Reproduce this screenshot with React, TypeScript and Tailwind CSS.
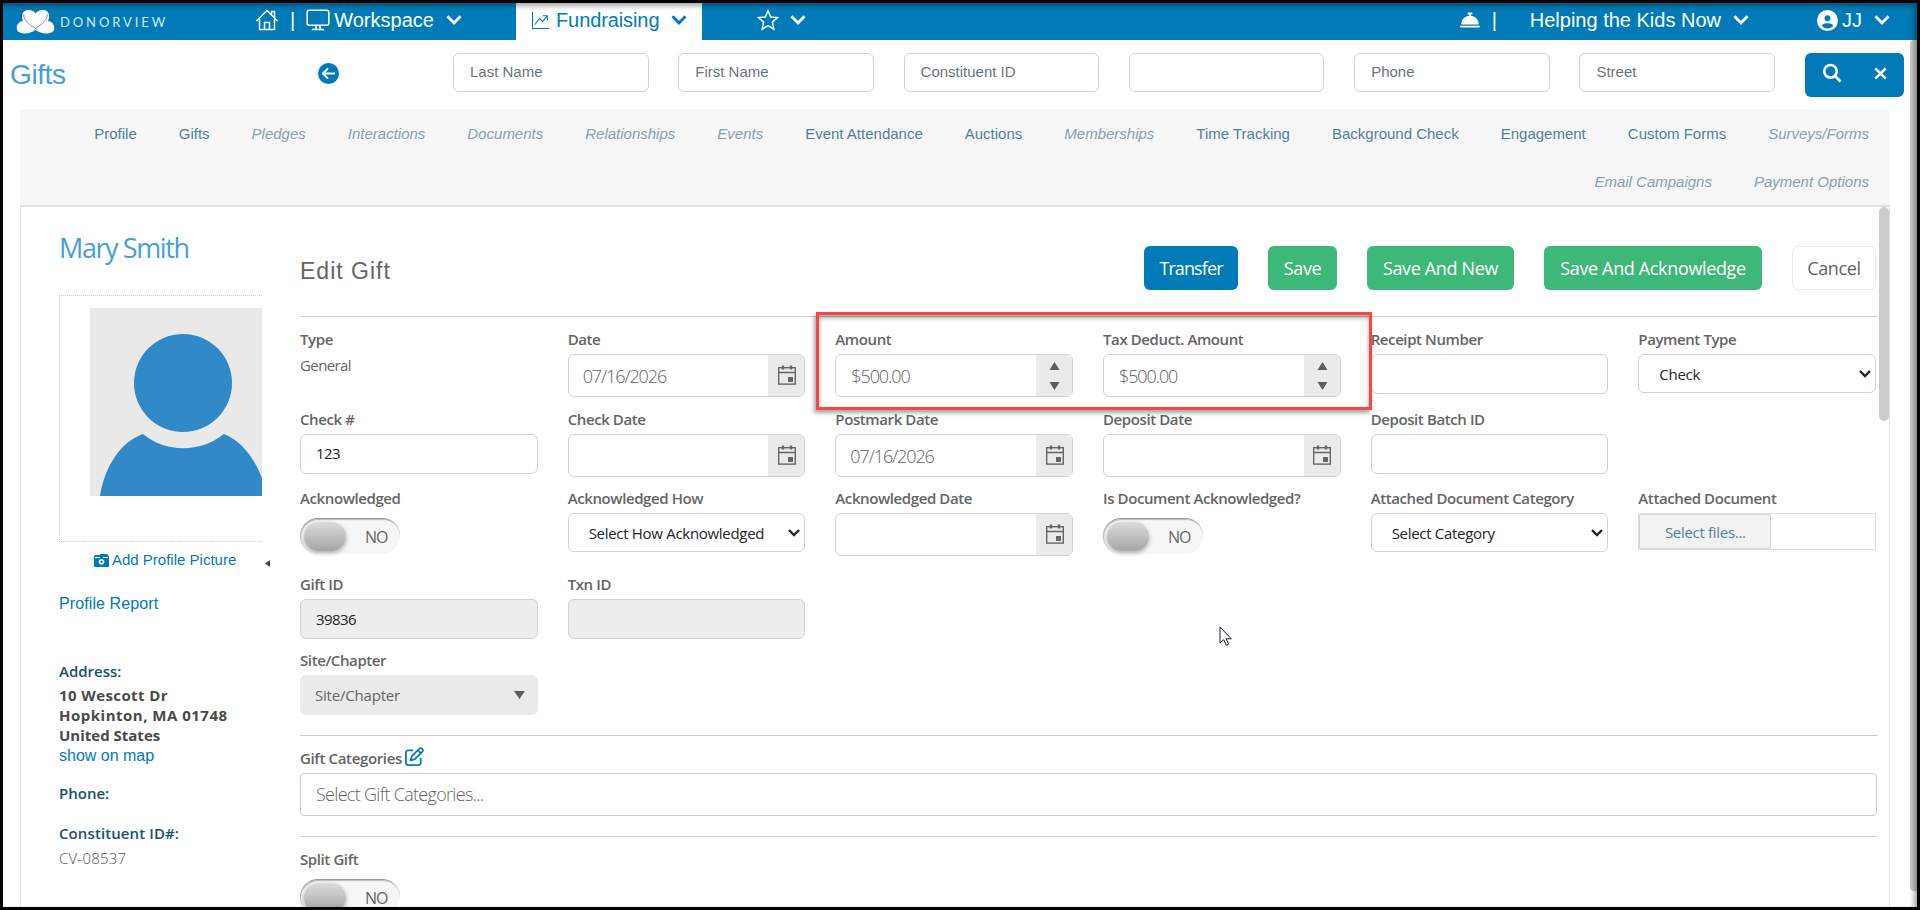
import { type ReactNode } from "react";
import { FaBellConcierge, FaCircleArrowLeft, FaCircleUser, FaRegPenToSquare } from "react-icons/fa6";
import { BsGraphUpArrow } from "react-icons/bs";

const searchFields = ["Last Name", "First Name", "Constituent ID", "", "Phone", "Street"];

const tabs = [
  { name: "Profile", active: true },
  { name: "Gifts", active: true },
  { name: "Pledges", active: false },
  { name: "Interactions", active: false },
  { name: "Documents", active: false },
  { name: "Relationships", active: false },
  { name: "Events", active: false },
  { name: "Event Attendance", active: true },
  { name: "Auctions", active: true },
  { name: "Memberships", active: false },
  { name: "Time Tracking", active: true },
  { name: "Background Check", active: true },
  { name: "Engagement", active: true },
  { name: "Custom Forms", active: true },
  { name: "Surveys/Forms", active: false },
  { name: "Email Campaigns", active: false },
  { name: "Payment Options", active: false },
];

function Logo() {
  return (
    <svg className="w-[39px] h-[25px]" viewBox="0 0 39 25" fill="none">
      <path
        d="M19.5 21C15 24.5 5 26 1.5 22C-1 17 3 12 7 12C4 5 8 1 12.5 1C16 1 18.5 2.5 19.5 4.5C21 2.5 23.5 1 27 1C32 1 35 6 32 12C36 12 40 17 37.5 22C34 26 24 24.5 19.5 21Z"
        fill="#fff"
      />
      <path d="M8 5C7 11 13 15 19.5 19.5C26 15 32 11 31 5" stroke="#7c86b4" strokeWidth="0.9" />
      <path d="M19.5 19.5L23 22.5M19.5 19.5L16 22.5" stroke="#b9a3c4" strokeWidth="0.6" />
    </svg>
  );
}

function HouseIcon() {
  return (
    <svg className="w-6 h-[22px]" viewBox="0 0 24 22" fill="none" stroke="#fff" strokeWidth="1.5">
      <path d="M1.5 12L12 1.5L22.5 12" />
      <path d="M16.5 5.5V2.5H19.5V9" />
      <path d="M4.5 10V20.5H19.5V10" />
      <path d="M9.5 20.5V13.5H14.5V20.5" />
    </svg>
  );
}

function MonitorIcon() {
  return (
    <svg className="w-6 h-[22px]" viewBox="0 0 24 22" fill="none" stroke="#fff" strokeWidth="1.6">
      <rect x="1.2" y="1.2" width="21.6" height="15" rx="2" />
      <path d="M10 16V20M14 16V20M6 20.5H18" />
    </svg>
  );
}

function StarIcon() {
  return (
    <svg className="w-[22px] h-[22px]" viewBox="0 0 22 22" fill="none" stroke="#fff" strokeWidth="1.5">
      <path d="M11 1.8L13.7 8L20.4 8.6L15.4 13.1L16.8 20.2L11 16.6L5.2 20.2L6.6 13.1L1.6 8.6L8.3 8Z" />
    </svg>
  );
}

function Chevron({ className = "" }: { className?: string }) {
  return (
    <svg className={`w-4 h-[10px] ${className}`} viewBox="0 0 16 10" fill="none" stroke="currentColor" strokeWidth="2.8">
      <path d="M1.5 1.3L8 8L14.5 1.3" />
    </svg>
  );
}

function CalendarIcon() {
  return (
    <svg className="w-[18px] h-5" viewBox="0 0 18 20" fill="none" stroke="#656565" strokeWidth="1.4">
      <rect x="0.7" y="2.7" width="16.6" height="16.4" />
      <path d="M1 7.5H17" />
      <path d="M5 0.5V4.5M13 0.5V4.5" strokeWidth="2.4" />
      <rect x="10" y="12" width="5" height="5" fill="#656565" stroke="none" />
    </svg>
  );
}

function Field({ label, children }: { label: string; children?: ReactNode }) {
  return (
    <div className="min-w-0">
      <label className="block h-7 leading-[26px] text-[15px] font-semibold tracking-[-0.4px] text-[#656565] whitespace-nowrap">
        {label}
      </label>
      {children}
    </div>
  );
}

function TextBox({ value = "", disabled = false }: { value?: string; disabled?: boolean }) {
  return (
    <div
      className={`flex items-center h-10 px-[15px] border border-[#ced4da] rounded-md text-[15px] tracking-[-0.6px] text-[#212529] ${
        disabled ? "bg-[#ededed]" : "bg-white pb-px"
      }`}
    >
      {value}
    </div>
  );
}

function DateBox({ value = "" }: { value?: string }) {
  return (
    <div className="flex h-[43px] border border-[#ced4da] rounded-md overflow-hidden">
      <div className="flex-1 flex items-center pl-[14px] text-lg font-light tracking-[-1.1px] text-[#656565]">{value}</div>
      <div className="w-[36px] flex items-center justify-center pl-px pb-px bg-[#eaeaea]">
        <CalendarIcon />
      </div>
    </div>
  );
}

function AmountBox({ value }: { value: string }) {
  return (
    <div className="flex h-[43px] border border-[#ced4da] rounded-md overflow-hidden">
      <div className="flex-1 flex items-center pl-[15px] text-lg font-light tracking-[-1.1px] text-[#656565]">{value}</div>
      <div className="w-[36px] flex items-center justify-center pl-px bg-[#eaeaea]">
        <svg className="w-[11px] h-7" viewBox="0 0 11 28" fill="#5c5c5c">
          <path d="M5.5 0L10.5 8H0.5Z" />
          <path d="M5.5 28L10.5 20H0.5Z" />
        </svg>
      </div>
    </div>
  );
}

function SelectBox({ value }: { value: string }) {
  return (
    <div className="flex items-center justify-between h-[39px] pl-5 pr-1 border border-[#ced4da] rounded-md text-[15px] tracking-[-0.3px] text-[#212529]">
      <span className="pt-0.5">{value}</span>
      <svg className="w-3 h-2" viewBox="0 0 12 8" fill="none" stroke="#212529" strokeWidth="2.4">
        <path d="M1 1L6 6L11 1" />
      </svg>
    </div>
  );
}

function Toggle() {
  return (
    <div className="flex items-center mt-[5px] w-[100px] h-9 pl-1 rounded-full bg-[#f6f6f6] border-t border-[#999] shadow-[inset_1px_1px_1px_rgba(0,0,0,0.25)]">
      <div className="w-[42px] h-[29px] rounded-full bg-linear-to-b from-[#dcdcdc] to-[#a5a5a5] shadow-[0_2px_4px_rgba(0,0,0,0.3)]"></div>
      <span className="ml-[19px] text-base tracking-[-1px] text-[#656565]">NO</span>
    </div>
  );
}

export default function App() {
  return (
    <div className="relative flex flex-col w-[1920px] h-[910px] border-3 border-black bg-white overflow-hidden font-['Open_Sans',sans-serif]">
      {/* Top bar */}
      <header className="flex shrink-0 h-[37px] bg-[#007bb8] text-white text-xl leading-[27px] font-['Liberation_Sans',sans-serif]">
        <div className="flex w-[513px] pl-[13px] pt-[6px]">
          <Logo />
          <span className="ml-[5px] mt-[6px] w-[114px] text-[13px] leading-[15px] tracking-[2.9px] font-['Lato',sans-serif] text-[#d5e8f3]">
            DONORVIEW
          </span>
          <div className="ml-[81px] flex h-[22px] items-center">
            <HouseIcon />
            <span className="ml-[11px]">|</span>
            <span className="ml-[11px]">
              <MonitorIcon />
            </span>
            <span className="ml-1">Workspace</span>
            <Chevron className="ml-3" />
          </div>
        </div>
        <div className="flex w-[186px] pl-[14px] pt-[6px] bg-white text-[#007bb8]">
          <div className="flex h-[22px] items-center">
            <BsGraphUpArrow className="w-[21px] h-[17px]" />
            <span className="ml-[5px] tracking-[-0.1px]">Fundraising</span>
            <Chevron className="ml-3" />
          </div>
        </div>
        <div className="flex flex-1 h-[34px] items-center">
          <span className="ml-[55px]">
            <StarIcon />
          </span>
          <Chevron className="ml-[11px]" />
        </div>
        <div className="flex h-[34px] items-center pr-[27px]">
          <FaBellConcierge className="size-5" />
          <span className="ml-3 w-1">|</span>
          <span className="ml-[34px] whitespace-nowrap">Helping the Kids Now</span>
          <Chevron className="ml-3" />
          <FaCircleUser className="ml-[68px] size-[21px]" />
          <span className="ml-1 whitespace-nowrap">JJ</span>
          <Chevron className="ml-3" />
        </div>
      </header>

      <div className="flex flex-1 min-h-0">
        <div className="flex flex-col flex-1 pl-[17px]">
          {/* Search row */}
          <div className="flex shrink-0 h-[69px] pt-[13px] font-['Liberation_Sans',sans-serif]">
            <h1 className="-ml-[10px] mt-[5px] w-[308px] text-[28px] leading-[34px] tracking-[-0.4px] text-[#479fd8]">Gifts</h1>
            <FaCircleArrowLeft className="mt-[10px] size-[21px] text-[#007bb8]" />
            <div className="ml-[114px] flex gap-[29.7px]">
              {searchFields.map((field, i) => (
                <div
                  key={i}
                  className="w-[195.6px] h-[39px] pl-4 leading-[35px] border border-[#d0d4da] rounded-md text-[15px] text-[#6c757d]"
                >
                  {field}
                </div>
              ))}
            </div>
            <div className="ml-[29.9px] flex items-center w-[99px] h-11 pl-[17px] pb-1 rounded-md bg-[#007bb8] text-white">
              <svg className="size-5" viewBox="0 0 20 20" fill="none" stroke="currentColor" strokeWidth="2.6">
                <circle cx="8.5" cy="8.3" r="6.3" />
                <path d="M13 13L18.5 18.5" />
              </svg>
              <svg className="ml-8 size-[13px]" viewBox="0 0 13 13" fill="none" stroke="currentColor" strokeWidth="2.6">
                <path d="M1.3 1.3L11.7 11.7M11.7 1.3L1.3 11.7" />
              </svg>
            </div>
          </div>

          {/* Tabs */}
          <nav className="flex shrink-0 flex-wrap justify-end gap-x-[42px] content-start w-[1870px] h-[98px] pt-px pl-[60px] pr-[21px] bg-[#f7f7f7] border-b-2 border-[#dee2e6] text-[15px] leading-[48px] font-['Liberation_Sans',sans-serif]">
            {tabs.map((tab) => (
              <a key={tab.name} className={tab.active ? "text-[#51819a]" : "italic text-[#86a1af]"}>
                {tab.name}
              </a>
            ))}
          </nav>

          <div className="flex flex-1 min-h-0 w-[1870px] border-x border-[#dee2e6] overflow-hidden">
            {/* Profile column */}
            <aside className="w-[241px] shrink-0 pl-[38px] pt-6 text-[15px]">
              <h2 className="h-[64px] text-[27px] leading-[34px] tracking-[-1.4px] text-[#479fd8] whitespace-nowrap">Mary Smith</h2>
              <div className="h-[247px] pl-[30px] pt-3 border border-r-0 border-dotted border-[#ccc]">
                <svg className="w-[172px] h-[188px]" viewBox="0 0 172 188">
                  <rect width="172" height="188" fill="#e9e9e9" />
                  <circle cx="93" cy="75" r="49" fill="#3289c8" />
                  <path d="M10 188C15 157 32 133 53 126C76 145 110 145 134 126C151 133 164 149 172 170V188Z" fill="#3289c8" />
                </svg>
              </div>
              <div className="relative flex h-[37px] items-center pl-[35px] text-[#007bb8] font-['Liberation_Sans',sans-serif]">
                <svg className="w-[15px] h-[13px] mr-[3px]" viewBox="0 0 15 13">
                  <path d="M1 1H6V0H13L15 2V12Q15 13 14 13H1Q0 13 0 12V2Z" fill="#007bb8" />
                  <path d="M1 3.5H6M9 3.5H14" stroke="#fff" strokeWidth="1" />
                  <circle cx="7.5" cy="7.8" r="2.8" fill="#fff" />
                  <circle cx="7.5" cy="7.8" r="1.1" fill="#007bb8" />
                </svg>
                Add Profile Picture
                <svg className="absolute right-[-8px] top-[18px] w-[5px] h-[7px]" viewBox="0 0 5 7">
                  <path d="M5 0V7L0 3.5Z" fill="#444" />
                </svg>
              </div>
              <p className="mt-[15px] text-base leading-5 tracking-[0.1px] text-[#007bb8] font-['Liberation_Sans',sans-serif]">
                Profile Report
              </p>
              <p className="mt-[47px] leading-5 font-semibold text-[#21506b]">Address:</p>
              <div className="mt-1 text-[15px] leading-5 font-bold text-[#4a4a4a] whitespace-nowrap">
                <p className="tracking-[0.4px]">10 Wescott Dr</p>
                <p className="tracking-[0.5px]">Hopkinton, MA 01748</p>
                <p>United States</p>
              </div>
              <p className="mt-px text-base leading-5 text-[#007bb8] font-['Liberation_Sans',sans-serif]">show on map</p>
              <p className="mt-[17px] leading-5 font-semibold text-[#21506b]">Phone:</p>
              <p className="mt-5 leading-5 font-semibold tracking-[0.1px] text-[#21506b]">Constituent ID#:</p>
              <p className="mt-[5px] leading-5 font-light tracking-[0.2px] text-[#555]">CV-08537</p>
            </aside>

            {/* Gift form */}
            <main className="ml-[38px] w-[1577px] shrink-0">
              <div className="flex h-[110px] pt-[39px] pr-px border-b border-[#ccc]">
                <h3 className="flex-1 mt-[11px] text-[23px] leading-7 tracking-[1px] text-[#656565] font-['Liberation_Sans',sans-serif]">
                  Edit Gift
                </h3>
                <div className="flex gap-[30px] h-11 text-lg leading-[44px] tracking-[-0.35px] text-center text-white whitespace-nowrap">
                  <button className="w-[94px] rounded-md bg-[#007bb8] tracking-[-0.9px]">Transfer</button>
                  <button className="w-[69px] rounded-md bg-[#3eb878]">Save</button>
                  <button className="w-[147px] rounded-md bg-[#3eb878]">Save And New</button>
                  <button className="w-[218px] rounded-md bg-[#3eb878]">Save And Acknowledge</button>
                  <button className="w-[84px] rounded-md border border-[#e9e9e9] leading-[42px] text-[#656565]">Cancel</button>
                </div>
              </div>

              <div className="relative grid grid-cols-6 grid-rows-[80px_79px_86px_76px_88px] gap-x-[30px] pt-[9px] pr-px">
                <Field label="Type">
                  <p className="-mt-px text-[15px] leading-6 tracking-[-0.6px] text-[#656565]">General</p>
                </Field>
                <Field label="Date">
                  <DateBox value="07/16/2026" />
                </Field>
                <Field label="Amount">
                  <AmountBox value="$500.00" />
                </Field>
                <Field label="Tax Deduct. Amount">
                  <AmountBox value="$500.00" />
                </Field>
                <Field label="Receipt Number">
                  <TextBox />
                </Field>
                <Field label="Payment Type">
                  <SelectBox value="Check" />
                </Field>

                <Field label="Check #">
                  <TextBox value="123" />
                </Field>
                <Field label="Check Date">
                  <DateBox />
                </Field>
                <Field label="Postmark Date">
                  <DateBox value="07/16/2026" />
                </Field>
                <Field label="Deposit Date">
                  <DateBox />
                </Field>
                <Field label="Deposit Batch ID">
                  <TextBox />
                </Field>
                <div></div>

                <Field label="Acknowledged">
                  <Toggle />
                </Field>
                <Field label="Acknowledged How">
                  <SelectBox value="Select How Acknowledged" />
                </Field>
                <Field label="Acknowledged Date">
                  <DateBox />
                </Field>
                <Field label="Is Document Acknowledged?">
                  <Toggle />
                </Field>
                <Field label="Attached Document Category">
                  <SelectBox value="Select Category" />
                </Field>
                <Field label="Attached Document">
                  <div className="h-[37px] border border-[#dedede]">
                    <div className="w-[132px] h-[35px] border border-[#d5d5d5] rounded-xs bg-[#f2f2f2] text-center text-[15px] leading-[35px] tracking-[-0.3px] text-[#51819a]">
                      Select files...
                    </div>
                  </div>
                </Field>

                <Field label="Gift ID">
                  <TextBox value="39836" disabled />
                </Field>
                <Field label="Txn ID">
                  <TextBox disabled />
                </Field>
                <div className="col-span-4"></div>

                <Field label="Site/Chapter">
                  <div className="flex items-center justify-between h-10 pl-[15px] pr-[13px] rounded-md bg-[#eaeaea] text-[15px] tracking-[-0.2px] text-[#656565]">
                    Site/Chapter
                    <svg className="w-[11px] h-2" viewBox="0 0 11 8">
                      <path d="M0 0H11L5.5 8Z" fill="#5c5c5c" />
                    </svg>
                  </div>
                </Field>

                {/* Highlight around the two amount fields */}
                <div className="absolute left-[516px] top-[-5px] w-[556px] h-[98px] border-3 border-[#fc4444] shadow-[-2px_3px_4px_rgba(0,0,0,0.35),inset_0_3px_4px_rgba(0,0,0,0.35)]"></div>
              </div>

              <div className="h-[102px] pt-[9px] border-y border-[#ccc]">
                <div className="flex h-7 leading-[26px] text-[15px] font-semibold tracking-[-0.35px] text-[#656565]">
                  Gift Categories
                  <FaRegPenToSquare className="ml-[3px] mt-0.5 size-[19px] text-[#007bb8]" />
                </div>
                <div className="flex items-center h-[43px] pl-[15px] pb-px border border-[#ccc] rounded text-lg font-light tracking-[-0.7px] text-[#656565]">
                  Select Gift Categories...
                </div>
              </div>

              <div className="pt-[9px]">
                <Field label="Split Gift">
                  <Toggle />
                </Field>
              </div>
            </main>

            <div className="ml-0.5 w-[10px] h-[214px] rounded-full bg-[#ccc]"></div>
          </div>
        </div>
        <div className="w-[7px] h-[851px] rounded-l bg-[#ccc]"></div>
      </div>

      {/* Mouse pointer */}
      <svg className="absolute left-[1216px] top-[623px] w-[14px] h-[21px]" viewBox="0 0 14 21">
        <path d="M1 1V17L4.7 13.7L7.2 19.3L9.6 18.2L7.2 12.8H12.3Z" fill="#fff" stroke="#1c1c2b" strokeWidth="1" />
      </svg>

      <div className="absolute inset-0 pointer-events-none shadow-[inset_-3px_3px_5px_rgba(0,0,0,0.35)]"></div>
    </div>
  );
}
